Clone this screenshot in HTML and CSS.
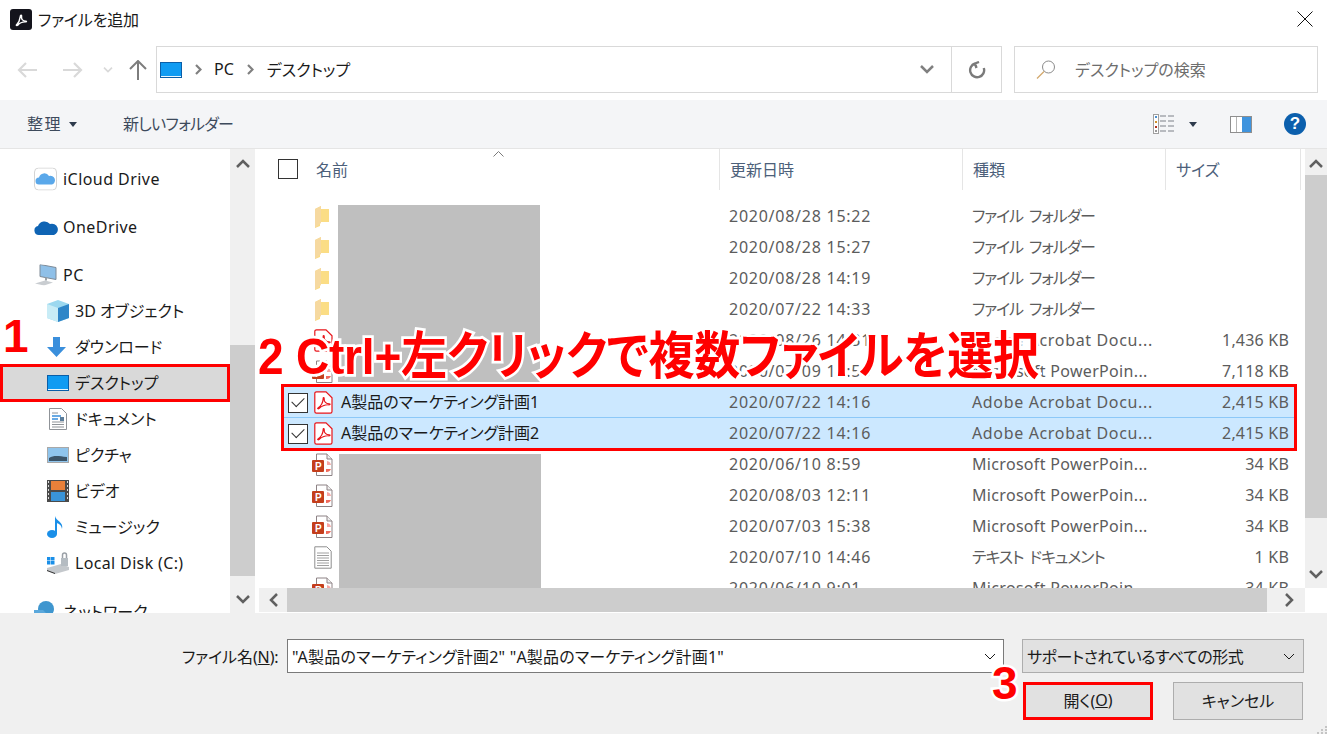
FILE: index.html
```html
<!DOCTYPE html>
<html lang="ja">
<head>
  <meta charset="UTF-8">
  <title>ファイルを追加</title>
  <link rel="stylesheet" href="styles.css">
</head>
<body>
  <svg class="defs" width="0" height="0">
    <symbol id="desktop" viewBox="0 0 22 16">
      <rect x="0.5" y="0.5" width="21" height="15" fill="#0f9bf2" stroke="#0a5ea8"/>
      <rect x="1" y="14" width="20" height="1" fill="#e8f6ff"/>
    </symbol>
    <symbol id="folder" viewBox="0 0 15 22">
      <path d="M1 3l6-3v3h8v13H6v4l-5 2z" fill="#fbdd85"/>
      <path d="M1 3l6-3v17l-6 5z" fill="#f6d9a0"/>
    </symbol>
    <symbol id="pdf" viewBox="0 0 19 23">
      <path d="M2.5 .8h9.5l6 6v13.7a1.7 1.7 0 0 1-1.7 1.7H2.5a1.7 1.7 0 0 1-1.7-1.7V2.5A1.7 1.7 0 0 1 2.5 .8z" fill="#fff" stroke="#e8141a" stroke-width="1.2"/>
      <path d="M4 17c3-2 5-6 5.2-9.500 0-1.500 1.300-1.200 1 .3-.4 3 2 5 5 5 1.300 0 1.300 1-.2 1-3.500-.2-7 .8-10 3.700-1 .8-1.800-.2-1-.5z" fill="none" stroke="#e8141a" stroke-width="1.200"/>
    </symbol>
    <symbol id="ppt" viewBox="0 0 21 23">
      <path d="M4.500 1h10.500l5 5v16.500H4.500z" fill="#fff" stroke="#8d8285"/>
      <path d="M15 1v5h5" fill="#eee" stroke="#8d8285"/>
      <path d="M15 8a5 5 0 0 1 4 4h-4z" fill="#f7a8a4"/>
      <path d="M14 11v5h5a5 5 0 0 1-5 3z" fill="#ef6a5c"/>
      <rect x="0" y="7" width="12" height="12" rx="1" fill="#c43e1c"/>
      <text x="3" y="16.500" class="ppt-letter">P</text>
    </symbol>
    <symbol id="txt" viewBox="0 0 18 23">
      <path d="M.8 .8h12l4.400 4.400v17H.8z" fill="#fff" stroke="#8f8f8f"/>
      <path d="M3 7h12M3 9.500h12M3 12h12M3 14.500h12M3 17h12M3 19.500h12" stroke="#a0a0a0"/>
    </symbol>
    <symbol id="down" viewBox="0 0 14 9">
      <path d="M1 1l6 6 6-6" fill="none" stroke="currentColor" stroke-width="2.500"/>
    </symbol>
    <symbol id="thin-down" viewBox="0 0 12 7">
      <path d="M1 1l5 5 5-5" fill="none" stroke="currentColor"/>
    </symbol>
  </svg>

  <div class="dialog">
    <div class="titlebar">
      <span class="app-icon">
        <svg width="16" height="16" viewBox="0 0 19 23"><path d="M3 20c3-3 5-8 5.500-12 .2-3 2.300-2.500 1.800 0-.5 4 2 6.500 6 6.500 1.500 0 1.500 1.200 0 1.200-4.500-.2-8.500 1-11.500 4.800-1.200 1-2.500 0-1.800-.5z" fill="none" stroke="#fff" stroke-width="2"/></svg>
      </span>
      <span class="title">ファイルを追加</span>
      <svg class="close" width="16" height="16" viewBox="0 0 16 16"><path d="M.5 .5l15 15M15.500 .5l-15 15" stroke="#111" fill="none"/></svg>
    </div>

    <div class="navbar">
      <div class="nav-buttons">
        <svg class="nav-back" width="20" height="16" viewBox="0 0 20 16"><path d="M9 1L2 8l7 7M2 8h18" fill="none" stroke="#d9d9d9" stroke-width="2.200"/></svg>
        <svg class="nav-forward" width="20" height="16" viewBox="0 0 20 16"><path d="M11 1l7 7-7 7M18 8H0" fill="none" stroke="#d9d9d9" stroke-width="2.200"/></svg>
        <svg class="nav-recent" width="10" height="6"><use href="#down"/></svg>
        <svg class="nav-up" width="18" height="20" viewBox="0 0 18 20"><path d="M1 9l8-8 8 8M9 1v19" fill="none" stroke="#7d7d7d" stroke-width="2"/></svg>
      </div>
      <div class="address">
        <svg class="address-icon" width="22" height="16"><use href="#desktop"/></svg>
        <svg class="crumb-sep" width="7" height="11" viewBox="0 0 7 11"><path d="M1 1l4.500 4.500L1 10" fill="none" stroke="#808080" stroke-width="2.200"/></svg>
        <span class="crumb">PC</span>
        <svg class="crumb-sep" width="7" height="11" viewBox="0 0 7 11"><path d="M1 1l4.500 4.500L1 10" fill="none" stroke="#808080" stroke-width="2.200"/></svg>
        <span class="crumb">デスクトップ</span>
        <svg class="address-down" width="14" height="9"><use href="#down"/></svg>
        <span class="address-refresh">
          <svg width="18" height="18" viewBox="0 0 18 18"><path d="M7 2.500A7 7 0 1 0 15.800 7M7 2.500l4-1.500M7 2.500L8.500 7" fill="none" stroke="#7a7a7a" stroke-width="2.400"/></svg>
        </span>
      </div>
      <div class="search">
        <svg width="20" height="20" viewBox="0 0 20 20"><circle cx="12.500" cy="7" r="6" fill="none" stroke="#8a8a8a"/><path d="M8 11.500L1 18.500" stroke="#d2a86c" stroke-width="1.300"/></svg>
        <span>デスクトップの検索</span>
      </div>
    </div>

    <div class="toolbar">
      <span class="tool-organize">整理</span>
      <span class="caret"></span>
      <span class="tool-new">新しいフォルダー</span>
      <span class="tool-right">
        <svg class="view-icon" width="22" height="20" viewBox="0 0 22 20">
          <rect x=".5" y=".5" width="5" height="19" fill="#fff" stroke="#a0a0a0"/>
          <rect x="2" y="2" width="2" height="2" fill="#4a8fd0"/><rect x="2" y="7" width="2" height="2" fill="#d0902a"/><rect x="2" y="12" width="2" height="2" fill="#b03020"/><rect x="2" y="16" width="2" height="2" fill="#9a9a9a"/>
          <path d="M7 2h6M15 2h6M7 7h6M15 7h6M7 12h6M15 12h6M7 17h6M15 17h6" stroke="#7c8088"/>
        </svg>
        <span class="caret view-caret"></span>
        <svg class="pane-icon" width="22" height="17" viewBox="0 0 22 17">
          <rect x=".5" y=".5" width="21" height="16" fill="#fff" stroke="#8e8e8e"/>
          <rect x="12" y="1" width="9" height="15" fill="#3f94de"/>
          <path d="M6.500 1v15" stroke="#b5b5b5"/>
        </svg>
        <span class="help">?</span>
      </span>
    </div>

    <div class="main">
      <div class="nav-pane">
        <div class="tree">
          <div class="tree-group">
            <div class="tree-item latin">
              <svg class="tree-icon" width="23" height="23" viewBox="0 0 23 23"><rect x=".5" y=".5" width="22" height="22" rx="4" fill="#fff" stroke="#d4d4d4"/><path d="M5 17a3.500 3.500 0 0 1 0-7 5.500 5.500 0 0 1 10-1.500A4.300 4.300 0 0 1 18 17z" fill="#5aa8ea"/></svg>
              iCloud Drive
            </div>
          </div>
          <div class="tree-group">
            <div class="tree-item latin">
              <svg class="tree-icon" width="24" height="16" viewBox="0 0 24 16"><path d="M5 16a4.500 4.500 0 0 1-1-8.900A7 7 0 0 1 16 5a5.500 5.500 0 0 1 4 11z" fill="#0f64b4"/></svg>
              OneDrive
            </div>
          </div>
          <div class="tree-group">
            <div class="tree-item latin">
              <svg class="tree-icon" width="23" height="21" viewBox="0 0 23 21"><path d="M6 0l16 3v12L6 12z" fill="#8fc0e8" stroke="#7e8a96"/><path d="M1 19l10-3 8 2-9 3z" fill="#c9cdd1"/><path d="M12 13v3" stroke="#9aa2a8" stroke-width="2"/></svg>
              PC
            </div>
            <div class="tree-item sub">
              <svg class="tree-icon" width="22" height="22" viewBox="0 0 22 22"><path d="M11 0l11 4v14l-11 4-11-4V4z" fill="#9cd8ef"/><path d="M11 8l11-4v14l-11 4z" fill="#2f86c8"/><path d="M0 4l11 4v14L0 18z" fill="#c8ecf6"/></svg>
              3D オブジェクト
            </div>
            <div class="tree-item sub">
              <svg class="tree-icon" width="19" height="20" viewBox="0 0 19 20"><path d="M6 0h7v10h6l-9.500 10L0 10h6z" fill="#3a8fdc"/></svg>
              ダウンロード
            </div>
            <div class="tree-item sub selected">
              <svg class="tree-icon" width="22" height="16"><use href="#desktop"/></svg>
              デスクトップ
            </div>
            <div class="tree-item sub">
              <svg class="tree-icon" width="22" height="22" viewBox="0 0 18 22"><path d="M.5 .5h12l5 5v16H.5z" fill="#fff" stroke="#8f9398"/><path d="M3 5h6M3 14h12M3 16.500h12M3 19h12" stroke="#8f9398"/><path d="M3 8h9M3 11h6" stroke="#3a8fdc" stroke-width="1.500"/><rect x="11" y="9" width="4" height="4" fill="#5b7d9a"/></svg>
              ドキュメント
            </div>
            <div class="tree-item sub">
              <svg class="tree-icon" width="22" height="16" viewBox="0 0 22 16"><rect x=".5" y=".5" width="21" height="15" fill="#8fc4ec" stroke="#a8a8a8"/><path d="M2 11c5-3 9-2 18-1v4H2z" fill="#3c5468"/></svg>
              ピクチャ
            </div>
            <div class="tree-item sub">
              <svg class="tree-icon" width="22" height="22" viewBox="0 0 22 22"><rect width="22" height="22" fill="#4a4a4a"/><rect x="4" y="1" width="14" height="9" fill="#e8803a"/><rect x="4" y="12" width="14" height="9" fill="#3a94d8"/><path d="M1.500 1v20M20.500 1v20" stroke="#ddd" stroke-dasharray="2 2"/></svg>
              ビデオ
            </div>
            <div class="tree-item sub">
              <svg class="tree-icon" width="17" height="22" viewBox="0 0 17 22"><ellipse cx="5" cy="18" rx="5" ry="4" fill="#1a8fe8"/><path d="M8 18V0c1 5 9 6 7 13-.5-4-3-5-5-6v11z" fill="#1a8fe8"/></svg>
              ミュージック
            </div>
            <div class="tree-item sub latin">
              <svg class="tree-icon" width="22" height="22" viewBox="0 0 22 22"><path d="M0 16l14-4 8 3v3l-14 4-8-3z" fill="#c4c8cc"/><path d="M0 18l8 3v1l-8-3z" fill="#333"/><rect x="0" y="5" width="3.500" height="3.500" fill="#1a8fe8"/><rect x="4" y="5" width="3.500" height="3.500" fill="#1a8fe8"/><rect x="0" y="9" width="3.500" height="3.500" fill="#1a8fe8"/><rect x="4" y="9" width="3.500" height="3.500" fill="#1a8fe8"/><rect x="14" y="6" width="7" height="8" fill="#b5bcc2"/><path d="M15.500 6V3a2 2 0 0 1 4 0v3" fill="none" stroke="#9aa0a6" stroke-width="1.500"/></svg>
              Local Disk (C:)
            </div>
          </div>
          <div class="tree-group">
            <div class="tree-item">
              <svg class="tree-icon" width="22" height="22" viewBox="0 0 22 22"><circle cx="12" cy="9" r="8" fill="#3f96cf"/><path d="M0 10h9l3 3h10v9H0z" fill="#5aa8dc"/></svg>
              ネットワーク
            </div>
          </div>
        </div>
        <div class="scroll-v nav-scroll">
          <svg class="arrow" width="14" height="9"><use href="#down"/></svg>
          <div class="nav-thumb-track"><div class="thumb nav-thumb"></div></div>
          <svg class="arrow" width="14" height="9"><use href="#down"/></svg>
        </div>
      </div>

      <div class="list-pane">
        <div class="list-wrap">
          <div class="list">
            <div class="list-head">
              <span class="head-check"></span>
              <span class="head-cell head-name">名前</span>
              <span class="head-cell head-date">更新日時</span>
              <span class="head-cell head-type">種類</span>
              <span class="head-cell head-size">サイズ</span>
              <svg class="sort-mark" width="11" height="6" viewBox="0 0 11 6"><path d="M.5 5.500l5-5 5 5" fill="none" stroke="#7a7a7a"/></svg>
            </div>
            <div class="rows">
              <div class="row"><i></i><svg width="15" height="22"><use href="#folder"/></svg><b></b><span>2020/08/28 15:22</span><span class="jp">ファイル フォルダー</span><em></em></div>
              <div class="row"><i></i><svg width="15" height="22"><use href="#folder"/></svg><b></b><span>2020/08/28 15:27</span><span class="jp">ファイル フォルダー</span><em></em></div>
              <div class="row"><i></i><svg width="15" height="22"><use href="#folder"/></svg><b></b><span>2020/08/28 14:19</span><span class="jp">ファイル フォルダー</span><em></em></div>
              <div class="row"><i></i><svg width="15" height="22"><use href="#folder"/></svg><b></b><span>2020/07/22 14:33</span><span class="jp">ファイル フォルダー</span><em></em></div>
              <div class="row"><i></i><svg width="19" height="23"><use href="#pdf"/></svg><b></b><span>2020/08/26 14:31</span><span class="adobe">Adobe Acrobat Docu...</span><em>1,436 KB</em></div>
              <div class="row"><i></i><svg class="wide" width="21" height="23"><use href="#ppt"/></svg><b></b><span>2020/07/09 12:53</span><span class="ms">Microsoft PowerPoin...</span><em>7,118 KB</em></div>
              <div class="row picked"><i></i><svg width="19" height="23"><use href="#pdf"/></svg><b>A製品のマーケティング計画1</b><span>2020/07/22 14:16</span><span class="adobe">Adobe Acrobat Docu...</span><em>2,415 KB</em></div>
              <div class="row picked"><i></i><svg width="19" height="23"><use href="#pdf"/></svg><b>A製品のマーケティング計画2</b><span>2020/07/22 14:16</span><span class="adobe">Adobe Acrobat Docu...</span><em>2,415 KB</em></div>
              <div class="row"><i></i><svg class="wide" width="21" height="23"><use href="#ppt"/></svg><b></b><span>2020/06/10 8:59</span><span class="ms">Microsoft PowerPoin...</span><em>34 KB</em></div>
              <div class="row"><i></i><svg class="wide" width="21" height="23"><use href="#ppt"/></svg><b></b><span>2020/08/03 12:11</span><span class="ms">Microsoft PowerPoin...</span><em>34 KB</em></div>
              <div class="row"><i></i><svg class="wide" width="21" height="23"><use href="#ppt"/></svg><b></b><span>2020/07/03 15:38</span><span class="ms">Microsoft PowerPoin...</span><em>34 KB</em></div>
              <div class="row"><i></i><svg width="18" height="23"><use href="#txt"/></svg><b></b><span>2020/07/10 14:46</span><span class="jp">テキスト ドキュメント</span><em>1 KB</em></div>
              <div class="row"><i></i><svg class="wide" width="21" height="23"><use href="#ppt"/></svg><b></b><span>2020/06/10 9:01</span><span class="ms">Microsoft PowerPoin...</span><em>34 KB</em></div>
            </div>
          </div>
          <div class="scroll-v list-scroll">
            <svg class="arrow" width="14" height="9"><use href="#down"/></svg>
            <div class="thumb list-thumb"></div>
            <svg class="arrow" width="14" height="9"><use href="#down"/></svg>
          </div>
        </div>
        <div class="scroll-h">
          <svg class="arrow-left" width="9" height="14" viewBox="0 0 9 14"><path d="M8 1L2 7l6 6" fill="none" stroke="#606060" stroke-width="2.500"/></svg>
          <div class="thumb hthumb"></div>
          <svg class="arrow-right" width="9" height="14" viewBox="0 0 9 14"><path d="M1 1l6 6-6 6" fill="none" stroke="#606060" stroke-width="2.500"/></svg>
        </div>
      </div>
    </div>

    <div class="footer">
      <div class="footer-line">
        <span class="file-label">ファイル名(<u>N</u>):</span>
        <div class="file-input">
          <span>"A製品のマーケティング計画2" "A製品のマーケティング計画1"</span>
          <svg width="12" height="7"><use href="#thin-down"/></svg>
        </div>
        <div class="file-type">
          <span>サポートされているすべての形式</span>
          <svg width="12" height="7"><use href="#thin-down"/></svg>
        </div>
      </div>
      <div class="footer-buttons">
        <span class="btn btn-open">開く(<u>O</u>)</span>
        <span class="btn btn-cancel">キャンセル</span>
      </div>
      <svg class="grip" width="10" height="8" viewBox="0 0 10 8"><path d="M8 0h2v2H8zM4 3h2v2H4zM8 3h2v2H8zM0 6h2v2H0zM4 6h2v2H4zM8 6h2v2H8z" fill="#c4c4c4"/></svg>
    </div>
  </div>

  <!-- 画像の上に重ねた注釈 -->
  <div class="mask mask-a"></div>
  <div class="mask mask-b"></div>
  <div class="mark-box box-nav"></div>
  <div class="mark-box box-rows"></div>
  <div class="mark-box box-open"></div>
  <div class="mark-text num-1">1</div>
  <div class="mark-text caption">2 Ctrl+左クリックで複数ファイルを選択</div>
  <div class="mark-text num-3">3</div>
</body>
</html>
```

FILE: styles.css
```css
* {
  box-sizing: border-box;
}
html, body {
  margin: 0;
  height: 100%;
}
body {
  position: relative;
  width: 1327px;
  height: 734px;
  overflow: hidden;
  background: #fff;
  color: #1a1a1a;
  font-family: "Noto Sans", "Noto Sans CJK JP", sans-serif;
  font-size: 16px;
  font-feature-settings: "palt";
}
.defs {
  position: absolute;
}
.ppt-letter {
  font-family: "Liberation Sans", sans-serif;
  font-size: 10px;
  font-weight: bold;
  fill: #fff;
}
.dialog {
  display: flex;
  flex-direction: column;
  height: 734px;
}

/* title */
.titlebar {
  display: flex;
  align-items: center;
  height: 46px;
  padding: 0 14px 8px 10px;
  flex: none;
}
.app-icon {
  display: flex;
  align-items: center;
  justify-content: center;
  width: 22px;
  height: 21px;
  border-radius: 3px;
  background: #14141c;
}
.title {
  margin-left: 6px;
  flex: 1;
  letter-spacing: -.2px;
}

/* address row */
.navbar {
  display: flex;
  height: 54px;
  flex: none;
  padding: 0 9px 7px 17px;
}
.nav-buttons {
  display: flex;
  align-items: center;
  width: 139px;
}
.nav-forward {
  margin-left: 26px;
}
.nav-recent {
  margin-left: 20px;
  color: #d9d9d9;
}
.nav-up {
  margin-left: 16px;
}
.address {
  display: flex;
  align-items: center;
  width: 846px;
  border: 1px solid #d9d9d9;
  padding-left: 3px;
}
.crumb {
  padding-bottom: 2px;
}
.crumb-sep {
  margin: 0 12px 0 13px;
}
.crumb + .crumb-sep {
  margin: 0 13px;
}
.address-down {
  margin-left: auto;
  color: #808080;
}
.address-refresh {
  display: flex;
  align-items: center;
  justify-content: center;
  width: 50px;
  height: 100%;
  margin-left: 17px;
  border-left: 1px solid #d9d9d9;
}
.search {
  display: flex;
  align-items: center;
  width: 304px;
  margin-left: 12px;
  padding-left: 21px;
  border: 1px solid #d9d9d9;
  color: #6d6d6d;
}
.search span {
  margin-left: 19px;
  padding-bottom: 2px;
}

/* toolbar */
.toolbar {
  display: flex;
  align-items: center;
  height: 49px;
  flex: none;
  padding: 0 21px 0 27px;
  background: #f4f5f7;
  border-bottom: 1px solid #e5e5e5;
  color: #3d4a5c;
}
.tool-organize {
  letter-spacing: 1.500px;
  padding-bottom: 2px;
}
.caret {
  width: 0;
  height: 0;
  margin-left: 7px;
  border: 4px solid transparent;
  border-top: 5px solid #2d3a4c;
  border-bottom: 0;
}
.tool-new {
  margin-left: 46px;
  letter-spacing: -.7px;
  padding-bottom: 2px;
}
.tool-right {
  display: flex;
  align-items: center;
  margin-left: auto;
}
.view-caret {
  margin-left: 14px;
}
.pane-icon {
  margin-left: 33px;
}
.help {
  display: flex;
  align-items: center;
  justify-content: center;
  width: 22px;
  height: 22px;
  margin-left: 32px;
  border-radius: 50%;
  background: #0b5fad;
  color: #fff;
  font-family: "Liberation Sans", sans-serif;
  font-size: 17px;
  font-weight: bold;
}

/* panes */
.main {
  display: flex;
  height: 464px;
  flex: none;
}
.nav-pane {
  display: flex;
  width: 259px;
  flex: none;
  border-right: 4px solid #fff;
}
.tree {
  width: 230px;
  padding-top: 12px;
  overflow: hidden;
}
.tree-group {
  margin-bottom: 12px;
}
.tree-item {
  display: flex;
  align-items: center;
  position: relative;
  height: 36px;
  padding-left: 63px;
  white-space: nowrap;
}
.tree-item.sub {
  padding-left: 75px;
  padding-bottom: 2px;
}
.tree-item.latin {
  letter-spacing: .45px;
}
.tree-item.sub.latin {
  padding-bottom: 0;
  letter-spacing: .35px;
}
.tree-item.selected {
  background: #d9d9d9;
}
.tree-icon {
  position: absolute;
  left: 34px;
  top: 50%;
  transform: translateY(-50%);
}
.sub .tree-icon {
  left: 47px;
}
.scroll-v {
  display: flex;
  flex-direction: column;
  align-items: center;
  background: #f0f0f0;
  color: #606060;
}
.arrow:first-child {
  transform: rotate(180deg);
  margin: 10px 0 7px;
  flex: none;
}
.arrow:last-child {
  margin: auto 0 9px;
  flex: none;
}
.nav-scroll {
  width: 25px;
  flex: none;
}
.nav-thumb-track {
  flex: 1;
  width: 100%;
  padding: 170px 0 19px;
  display: flex;
}
.thumb {
  background: #cdcdcd;
}
.nav-thumb {
  flex: 1;
}
.list-pane {
  display: flex;
  flex-direction: column;
  flex: 1;
  min-width: 0;
}
.list-wrap {
  display: flex;
  height: 439px;
  flex: none;
}
.list {
  flex: 1;
  min-width: 0;
  overflow: hidden;
}
.list-head {
  position: relative;
  display: flex;
  height: 41px;
  color: #4c607a;
}
.head-check {
  position: absolute;
  left: 19px;
  top: 10px;
  width: 20px;
  height: 20px;
  border: 1px solid #333;
}
.head-cell {
  display: flex;
  align-items: center;
  padding-left: 10px;
  padding-bottom: 2px;
  border-right: 1px solid #e5e5e5;
}
.head-name {
  width: 461px;
  margin-left: 0;
  padding-left: 57px;
}
.head-date {
  width: 243px;
}
.head-type {
  width: 203px;
}
.head-size {
  width: 135px;
}
.sort-mark {
  position: absolute;
  left: 234px;
  top: 2px;
}
.rows {
  padding-top: 11px;
}
.row {
  display: grid;
  grid-template-columns: 31px 27px 388px 243px 200px 1fr;
  align-items: center;
  width: 1012px;
  height: 31px;
  margin-left: 24px;
  color: #5c5c5c;
  letter-spacing: .75px;
  white-space: nowrap;
}
.row span, .row em {
  padding-bottom: 2px;
}
.row svg {
  justify-self: start;
}
.row .wide {
  margin-left: -2px;
}
.row .jp {
  padding-bottom: 4px;
  letter-spacing: -1.100px;
  word-spacing: 3px;
}
.row .adobe {
  letter-spacing: .65px;
}
.row .ms {
  letter-spacing: .32px;
}
.row b {
  padding-bottom: 4px;
  font-weight: normal;
  color: #1a1a1a;
  letter-spacing: 0;
}
.row em {
  justify-self: end;
  padding-right: 6px;
  font-style: normal;
  letter-spacing: .2px;
}
.picked {
  background: #cce8ff;
  box-shadow: inset 0 -1px 0 #8cc8f8;
}
.picked i {
  position: relative;
  justify-self: start;
  margin-left: 5px;
  width: 20px;
  height: 20px;
  border: 1px solid #333;
  background: #fff;
}
.picked i::after {
  content: "";
  position: absolute;
  left: 3px;
  top: 3px;
  width: 11px;
  height: 6px;
  border-left: 1.500px solid #333;
  border-bottom: 1.500px solid #333;
  transform: rotate(-45deg);
}
.list-scroll {
  width: 22px;
  flex: none;
}
.list-thumb {
  width: 100%;
  height: 343px;
  flex: none;
}
.scroll-h {
  display: flex;
  align-items: center;
  height: 24px;
  margin-right: 22px;
  background: #f0f0f0;
  flex: none;
}
.arrow-left {
  margin: 0 9px 0 10px;
}
.hthumb {
  width: 980px;
  height: 100%;
}
.arrow-right {
  margin-left: 18px;
}

/* bottom */
.footer {
  position: relative;
  flex: 1;
  padding: 26px 23px 0 0;
  background: #f0f0f0;
}
.footer-line {
  display: flex;
  align-items: center;
  height: 34px;
}
.file-label {
  margin-left: 182px;
  width: 105px;
  color: #1a1a1a;
  letter-spacing: -.1px;
}
.file-input {
  display: flex;
  align-items: center;
  justify-content: space-between;
  width: 717px;
  height: 34px;
  padding: 0 7px 0 4px;
  background: #fff;
  border: 1px solid #7a7a7a;
}
.file-input span {
  letter-spacing: .2px;
}
.file-type {
  display: flex;
  align-items: center;
  justify-content: space-between;
  width: 282px;
  height: 34px;
  margin-left: 18px;
  padding: 0 8px 0 4px;
  background: #e1e1e1;
  border: 1px solid #adadad;
}
.file-type span {
  letter-spacing: -.5px;
}
.footer-buttons {
  display: flex;
  justify-content: flex-end;
  gap: 21px;
  margin: 9px 1px 0 0;
}
.btn {
  display: flex;
  align-items: center;
  justify-content: center;
  height: 38px;
  padding-bottom: 2px;
  background: #e1e1e1;
  border: 1px solid #adadad;
}
.btn-open {
  width: 128px;
}
.btn-cancel {
  width: 130px;
}
.grip {
  position: absolute;
  right: 0;
  bottom: 0;
}

/* annotations */
.mask {
  position: absolute;
  background: #bfbfbf;
}
.mask-a {
  left: 338px;
  top: 205px;
  width: 202px;
  height: 177px;
}
.mask-b {
  left: 339px;
  top: 454px;
  width: 202px;
  height: 134px;
}
.mark-box {
  position: absolute;
  border: 3px solid #f00;
}
.box-nav {
  left: 0;
  top: 364px;
  width: 230px;
  height: 38px;
}
.box-rows {
  left: 281px;
  top: 384px;
  width: 1016px;
  height: 67px;
}
.box-open {
  left: 1023px;
  top: 682px;
  width: 130px;
  height: 38px;
}
.mark-text {
  position: absolute;
  color: #f00;
  font-family: "Liberation Sans", "Noto Sans CJK JP", sans-serif;
  font-weight: bold;
  -webkit-text-stroke: 5px #fff;
  paint-order: stroke fill;
  line-height: 1;
  white-space: nowrap;
}
.num-1 {
  left: 3px;
  top: 313px;
  font-size: 46px;
}
.caption {
  left: 258px;
  top: 333px;
  font-size: 46px;
  letter-spacing: -.2px;
  transform: scaleY(1.1);
}
.num-3 {
  left: 992px;
  top: 660px;
  font-size: 46px;
}
```
